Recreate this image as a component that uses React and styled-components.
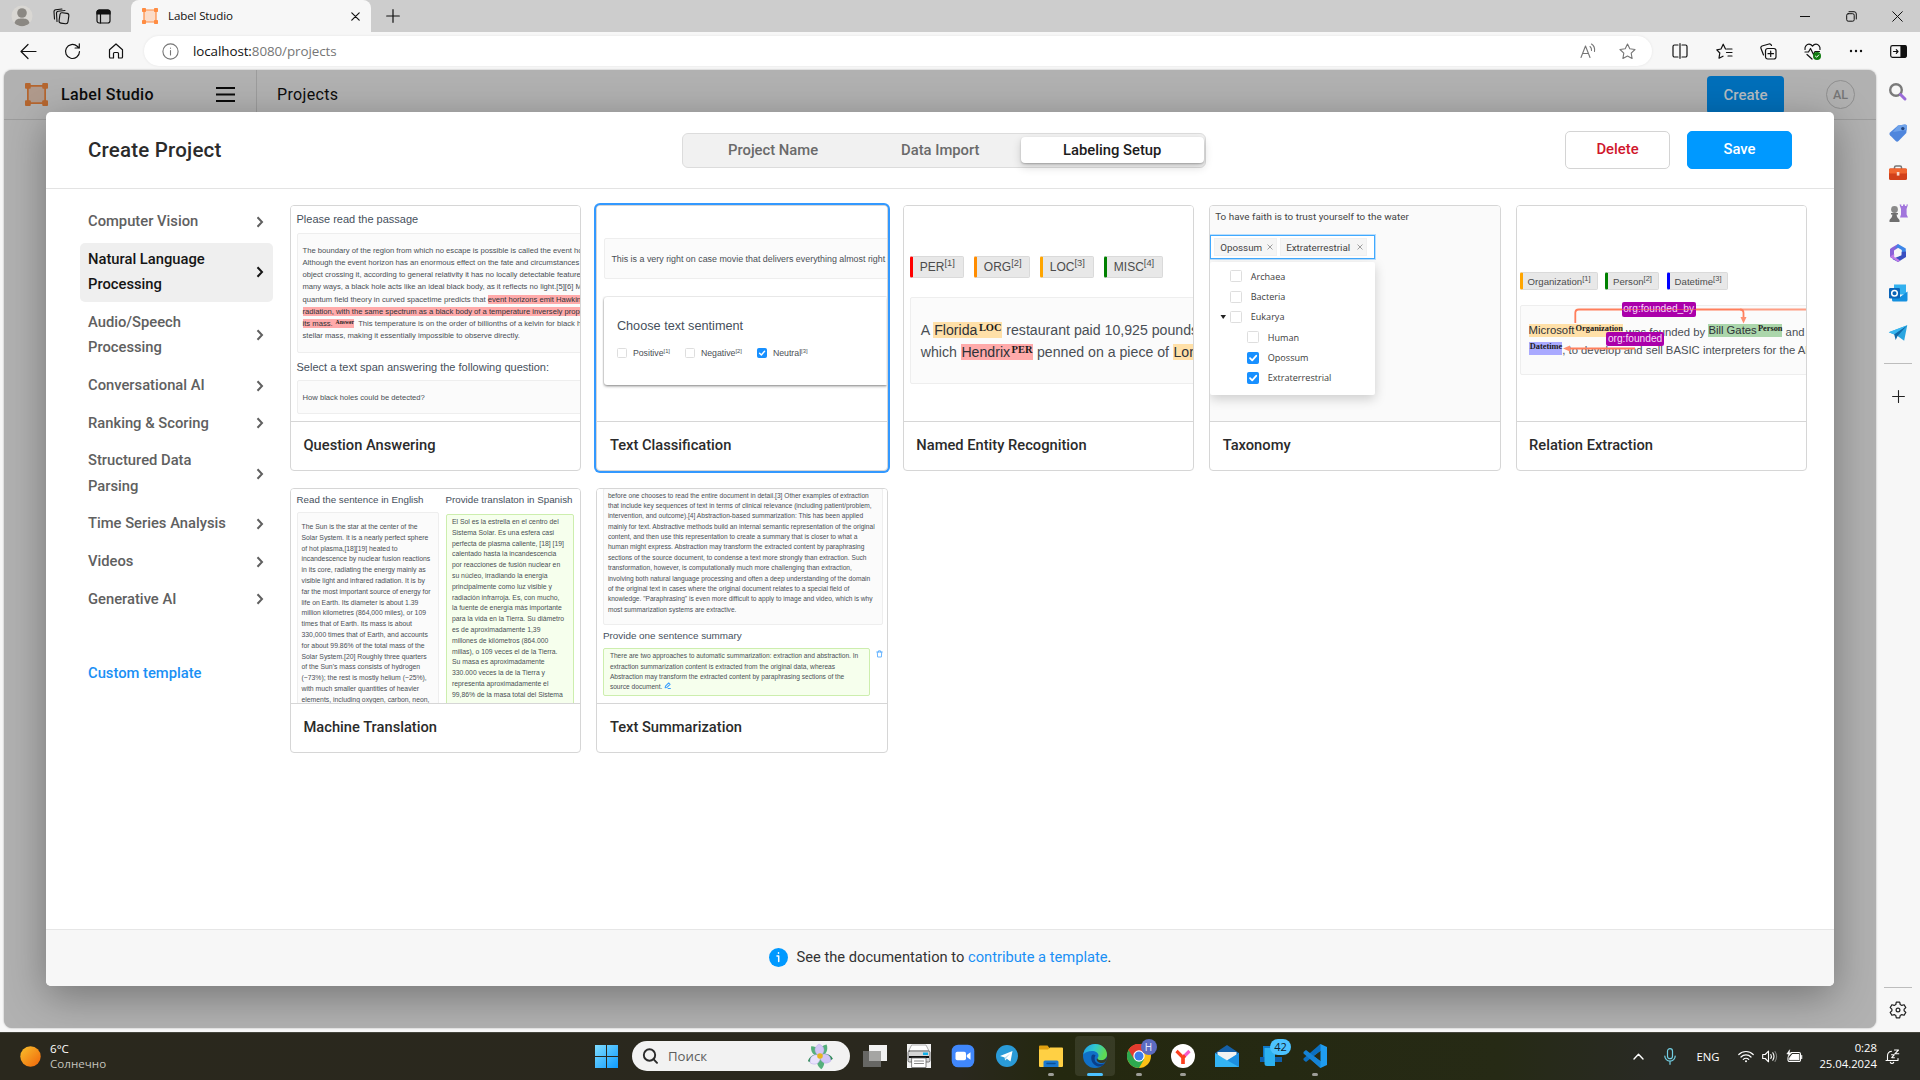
import React from "react";
import styled, { createGlobalStyle, css } from "styled-components";

const Global = createGlobalStyle`
  * { box-sizing: border-box; }
  html, body { margin: 0; padding: 0; }
  body { width: 1920px; height: 1080px; overflow: hidden; background: #f7f7f7; font-family: Roboto, "Liberation Sans", sans-serif; }
`;

const arial = `"Liberation Sans", Arial, sans-serif`;
const segoe = `"Open Sans", "Noto Sans", sans-serif`;

/* ---------- browser chrome ---------- */
const Desktop = styled.div`
  width: 1920px; height: 1080px; display: flex; flex-direction: column; overflow: hidden;
`;
const TitleBar = styled.div`
  height: 32px; flex: none; background: #cdcdcd; display: flex; align-items: center;
`;
const Slot = styled.div`
  width: ${(p) => p.$w || 44}px; height: 100%; flex: none; display: flex; align-items: center; justify-content: center;
  svg { display: block; flex: none; }
`;
const Tab = styled.div`
  width: 240px; height: 32px; background: #f7f7f7; border-radius: 8px 8px 0 0; display: flex; align-items: center;
  padding-left: 11px; gap: 10px; font: 12px ${segoe}; color: #111;
`;
const TabTitle = styled.span`
  flex: 1; letter-spacing: -0.15px; white-space: nowrap; font-size: 11.6px; padding-bottom: 1px;
`;
const WindowButtons = styled.div`
  margin-left: auto; display: flex; height: 100%;
`;
const Toolbar = styled.div`
  height: 38px; flex: none; background: #f7f7f7; display: flex; align-items: center;
`;
const NavGroup = styled.div`
  width: 144px; height: 100%; display: flex; padding-left: 6px;
`;
const AddressBar = styled.div`
  width: 1508px; height: 30px; border-radius: 15px; background: #fff; display: flex; align-items: center;
  padding-left: 16px; box-shadow: 0 0 3px rgba(0,0,0,0.08);
`;
const Url = styled.span`
  flex: 1; margin-left: 13px; font: 13.4px ${segoe}; color: #767676; letter-spacing: -0.08px;
  b { font-weight: 400; color: #111; }
`;
const Middle = styled.div`
  height: 962px; flex: none; display: flex; background: #f7f7f7; padding-left: 4px;
`;
const EdgeBar = styled.div`
  width: 44px; height: 100%; display: flex; flex-direction: column; align-items: center;
`;
const EdgeSlot = styled.div`
  width: 44px; height: ${(p) => p.$h || 40}px; display: flex; align-items: center; justify-content: center; flex: none;
`;
const EdgeLine = styled.div`
  width: 28px; height: 1px; background: #bdbdbd; flex: none;
`;
const Spacer = styled.div`
  flex: 1;
`;

/* ---------- page behind the dialog ---------- */
const Page = styled.div`
  width: 1872px; height: 958px; background: #b1b1b1; border-radius: 8px; overflow: hidden; position: relative;
  box-shadow: 0 0 2px rgba(0,0,0,0.35);
`;
const AppHeader = styled.div`
  height: 50px; border-bottom: 1px solid #9c9c9c; display: flex; align-items: center; color: #0c0c0c;
  padding: 0 21px;
`;
const Brand = styled.div`
  width: 231px; display: flex; align-items: center; height: 100%; padding-bottom: 1px;
`;
const BrandName = styled.span`
  margin-left: 13px; font-size: 16px; font-weight: 500; width: 155px; letter-spacing: 0.33px;
`;
const Crumb = styled.div`
  height: 49px; border-left: 1px solid #9c9c9c; padding-left: 20px; font-size: 16px; line-height: 49px; letter-spacing: 0.35px; flex: 1;
`;
const CreateButton = styled.div`
  width: 77px; height: 38px; border-radius: 4px; background: #006fba; color: #b5bcc1; font-size: 15px; font-weight: 500;
  display: flex; align-items: center; justify-content: center; margin-right: 42px;
`;
const Avatar = styled.div`
  width: 29px; height: 29px; border-radius: 50%; border: 1px solid #8f8f8f; color: #767676; font-size: 12.5px; font-weight: 500;
  display: flex; align-items: center; justify-content: center;
`;

/* ---------- dialog ---------- */
const Dialog = styled.div`
  position: absolute; left: 42px; top: 42px; width: 1788px; height: 874px; background: #fff; border-radius: 5px;
  box-shadow: 0 10px 40px rgba(0,0,0,0.34); display: flex; flex-direction: column; overflow: hidden;
`;
const DialogHeader = styled.div`
  height: 77px; flex: none; border-bottom: 1px solid #e3e3e3; display: flex; align-items: center; padding: 0 42px;
`;
const DialogTitle = styled.div`
  width: 594px; font-size: 20.5px; font-weight: 500; color: #2b2b2b; letter-spacing: 0.2px; padding-bottom: 1px;
`;
const Toggle = styled.div`
  width: 524px; height: 35px; border: 1px solid #dcdcdc; border-radius: 6px; background: #f1f1f1; display: flex; padding: 3px 1px 4px 0;
`;
const ToggleItem = styled.div`
  width: ${(p) => p.$w}px; padding-left: ${(p) => p.$pad}px; font-size: 14.8px; font-weight: 500; line-height: 26px; color: #6a6a6a; white-space: nowrap;
  ${(p) => p.$on && css`
    color: #1c1c1c; background: #fff; border-radius: 4px;
    box-shadow: 0 1px 2px rgba(0,0,0,0.25), 0 4px 10px rgba(0,0,0,0.16);
  `}
`;
const Actions = styled.div`
  margin-left: auto; display: flex; gap: 17px;
`;
const Button = styled.div`
  width: 105px; height: 38px; border-radius: 5px; font-size: 14.8px; font-weight: 500; display: flex; align-items: center; justify-content: center;
  padding-bottom: 2px; background: ${(p) => (p.$primary ? "#0099ff" : "#fff")}; color: ${(p) => (p.$primary ? "#fff" : "#d0162c")};
  border: 1px solid ${(p) => (p.$primary ? "#0099ff" : "#d4d4d4")};
`;
const DialogBody = styled.div`
  flex: 1; display: flex; padding: 16px 27px 0 34px;
`;
const Menu = styled.div`
  width: 193px; margin-right: 17px; flex: none; display: flex; flex-direction: column; gap: 4px;
`;
const MenuItem = styled.div`
  padding: 4px 9px 4px 8px; border-radius: 5px; font-size: 14.75px; font-weight: 500; line-height: 25.6px; display: flex; align-items: center; justify-content: space-between;
  color: ${(p) => (p.$on ? "#151515" : "#606060")}; background: ${(p) => (p.$on ? "#efefef" : "transparent")};
  span { max-width: 150px; }
`;
const CustomLink = styled.div`
  margin: 40px 8px 0; font-size: 14.75px; font-weight: 500; line-height: 26px; color: #1a90f5;
`;
const Cards = styled.div`
  flex: 1; display: grid; grid-template-columns: repeat(5, 1fr); grid-template-rows: 266px 265px; column-gap: 15px; row-gap: 17px; align-content: start;
`;
const CardBox = styled.div`
  min-width: 0; border: 1px solid #d6d6d6; border-radius: 4px; display: flex; flex-direction: column; overflow: hidden; background: #fff;
  ${(p) => p.$on && css`box-shadow: 0 0 0 2px #3399ff;`}
`;
const Preview = styled.div`
  flex: 1; min-height: 0; overflow: hidden; border-bottom: 1px solid #d6d6d6; position: relative;
  font-family: ${arial}; color: #4a4f55; white-space: nowrap; background: ${(p) => p.$bg || "#fff"};
  padding: ${(p) => p.$pad || "0"};
`;
const CardTitle = styled.div`
  height: 48px; flex: none; padding: 0 12.5px; line-height: 46px; font-size: 14.7px; font-weight: 500; color: #2b2b2b; white-space: nowrap;
`;
const DialogFooter = styled.div`
  height: 57px; flex: none; border-top: 1px solid #e6e6e6; background: #f7f7f7; display: flex; align-items: center; justify-content: center;
  font-size: 14.7px; color: #333; gap: 9px; padding-bottom: 2px;
  a { color: #1a90f5; }
`;

/* ---------- preview pieces ---------- */
const Heading = styled.div`
  font-size: ${(p) => p.$s || 11}px; line-height: 20px; height: 20px; color: #46505c; padding-top: ${(p) => p.$t || 0}px;
`;
const Panel = styled.div`
  height: ${(p) => p.$h}px; border: 1px solid #eeeeee; background: #fbfbfb; border-radius: 2px;
  padding: ${(p) => p.$pad || "0"}; margin: ${(p) => p.$m || "0"}; width: ${(p) => (p.$w ? p.$w + "px" : "auto")}; flex: none;
  font-size: ${(p) => p.$s}px; line-height: ${(p) => p.$lh}px;
`;
const GreenPanel = styled(Panel)`
  background: #f6ffed; border-color: #cdeeae;
`;
const Row = styled.div`
  height: ${(p) => p.$lh}px; white-space: pre;
`;
const Mark = styled.span`
  background: ${(p) => p.$c}; display: inline-block; line-height: ${(p) => p.$h}px; height: ${(p) => p.$h}px; vertical-align: top; margin-top: ${(p) => p.$t || 0}px;
  padding: 0 ${(p) => p.$p || 0}px; color: #2e3238;
  b { font-family: "Liberation Serif", "Times New Roman", serif; font-size: 0.74em; position: relative; top: -0.42em; margin-left: 0.14em; color: #1a1a1a; }
`;
const SentimentPanel = styled.div`
  height: 88px; background: #fff; border-radius: 3px 0 0 3px; box-shadow: 0 1px 3px rgba(0,0,0,0.5), 0 0 2px rgba(0,0,0,0.08); margin-top: 18px; padding: 19px 0 0 12.5px;
  clip-path: inset(-1px 0 -6px -2px);
`;
const Choices = styled.div`
  display: flex; margin-top: 11px; height: 12px; align-items: center; font-size: 8.75px;
`;
const Choice = styled.div`
  width: ${(p) => p.$w}px; display: flex; align-items: center; gap: 6px;
  sup { font-size: 5.8px; line-height: 0; vertical-align: 3px; }
`;
const Check = styled.span`
  width: ${(p) => p.$s}px; height: ${(p) => p.$s}px; border: 1px solid ${(p) => (p.$on ? "#1890ff" : "#dedede")}; background: ${(p) => (p.$on ? "#1890ff" : "#fff")};
  border-radius: 1.5px; display: flex; align-items: center; justify-content: center; flex: none;
`;
const Tags = styled.div`
  display: flex; gap: ${(p) => p.$gap}px;
`;
const Tag = styled.div`
  width: ${(p) => p.$w}px; height: ${(p) => p.$h}px; line-height: ${(p) => p.$h - 1}px; font-size: ${(p) => p.$s}px; background: #e8e8e8; border: 1px solid #dadada;
  border-left: 3px solid ${(p) => p.$c}; border-radius: 2px; padding-left: ${(p) => p.$p}px; color: #4c4c4c;
  sup { font-size: 0.78em; line-height: 0; vertical-align: 0.5em; }
`;
const SelectBox = styled.div`
  width: 165px; height: 24px; border: 1px solid #40a9ff; box-shadow: 0 0 0 1px rgba(64,169,255,0.35); background: #fff; display: flex; gap: 3px; padding: 2px 3px; margin-top: 8px;
  font: 9.8px Roboto, sans-serif; color: #444;
`;
const SelectTag = styled.div`
  width: ${(p) => p.$w}px; height: 18px; background: #f5f5f5; border: 1px solid #f0f0f0; display: flex; align-items: center; justify-content: space-between; padding: 0 3px 0 5px;
`;
const Dropdown = styled.div`
  width: 165px; height: 133px; background: #fff; margin-top: 3px; box-shadow: 0 4px 12px rgba(0,0,0,0.18); border-radius: 2px; padding-top: 4px;
  font: 9.1px ${segoe}; color: #3c3c3c;
`;
const TreeRow = styled.div`
  height: 20.35px; display: flex; align-items: center; gap: 8.5px; padding-left: ${(p) => (p.$deep ? 37 : p.$caret ? 9 : 20)}px;
  > svg { margin-right: -6.5px; }
`;
const Plain = styled.div`
  font: 9.9px Roboto, sans-serif; line-height: 21px; height: 21px; color: #444; padding-left: 5px; letter-spacing: 0.02px;
`;
const Columns = styled.div`
  display: flex; gap: 7px;
`;
const RelationLayer = styled.svg`
  position: absolute; left: 0; top: 0;
`;
const RelationLabel = styled.div`
  position: absolute; left: ${(p) => p.$x}px; top: ${(p) => p.$y}px; width: ${(p) => p.$w}px; height: 14.5px; background: #aa00aa; border-radius: 2px;
  color: #f6dcf6; font-size: 10.2px; line-height: 13.5px; text-align: center;
`;
const Strike = styled.i`
  position: absolute; left: 0; right: 0; top: 6.5px; height: 1.5px; background: rgba(255,110,80,0.55);
`;
const SummaryRow = styled.div`
  display: flex; gap: 6px; margin-top: 2.5px;
  > svg { margin-top: 2px; }
`;

/* ---------- taskbar ---------- */
const Taskbar = styled.div`
  height: 48px; flex: none; background: linear-gradient(90deg, #2a281d 0, #2a281e 50%, #24280f 55%, #262a15 78%, #292a24 86%); border-top: 1px solid #45453c; display: flex; align-items: center;
  font-family: ${segoe}; color: #fff; padding-bottom: 1px;
`;
const Weather = styled.div`
  width: 585px; padding-left: 20px; display: flex; gap: 9px; align-items: center; font-size: 11.6px; line-height: 15.5px;
  div { color: #c4c4be; font-size: 11.6px; }
  div:first-child { color: #fff; }
`;
const Search = styled.div`
  width: 218px; height: 30px; border-radius: 15px; background: #f2f2f2; margin: 0 3px 0 4px; display: flex; align-items: center; padding: 0 16px 0 10px; color: #5d5d5d; font-size: 13.2px;
  span { flex: 1; margin-left: 10px; padding-bottom: 1px; }
`;
const Task = styled.div`
  width: 44px; height: 46px; display: flex; align-items: center; justify-content: center; position: relative; flex: none;
  &::before { content: ""; position: absolute; left: 2px; top: 3px; width: 40px; height: 40px; border-radius: 4px; background: ${(p) => (p.$active ? "rgba(255,255,255,0.09)" : "transparent")}; }
  &::after { content: ""; position: absolute; bottom: 3px; height: 3px; border-radius: 2px; width: ${(p) => (p.$active ? 16 : p.$run ? 6 : 0)}px; background: ${(p) => (p.$active ? "#4cc2ff" : "#9d9d97")}; }
  > svg { position: relative; }
`;
const Badge = styled.span`
  position: absolute; left: ${(p) => p.$x}px; top: ${(p) => p.$y}px; width: ${(p) => p.$w}px; height: 16px; border-radius: 8px; background: ${(p) => p.$bg}; color: ${(p) => p.$fg};
  font-size: ${(p) => p.$s}px; line-height: 16px; text-align: center;
`;
const Tray = styled.div`
  margin-left: auto; display: flex; height: 100%; align-items: center; font-size: 11.3px;
`;
const Clock = styled.div`
  width: 66px; text-align: right; line-height: 16px; font-size: 11.3px; margin-right: 1px; white-space: nowrap;
`;

/* ---------- icons ---------- */
const Svg = ({ s = 16, w, h, vb, children, c = "#222", sw = 1.2, ...r }) => (
  <svg width={w || s} height={h || s} viewBox={vb || `0 0 ${w || s} ${h || s}`} fill="none" stroke={c} strokeWidth={sw} strokeLinecap="round" strokeLinejoin="round" {...r}>{children}</svg>
);
const LabelLogo = ({ s, a = "#ff8c42", f = "#fbdcc8" }) => (
  <Svg s={s} vb="0 0 24 24" c="none">
    <rect x="3" y="3" width="18" height="18" fill={f} stroke={a} strokeWidth="1.8" />
    {[[0, 0], [18, 0], [0, 18], [18, 18]].map(([x, y]) => <rect key={`${x}-${y}`} x={x} y={y} width="6" height="6" rx="1" fill={a} />)}
  </Svg>
);
const Chevron = ({ c }) => <Svg w={8} h={12} c={c} sw={2}><path d="M1.5 1.2 6 6 1.5 10.8" strokeLinecap="butt" strokeLinejoin="miter" /></Svg>;
const Tick = ({ s }) => <Svg s={s} vb="0 0 10 10" c="#fff" sw={1.8}><path d="M2 5.2 4.2 7.4 8.2 2.8" /></Svg>;

const EdgeIcons = [
  <Svg s={20} key="s" sw={2.4} c="#7a7a7a"><circle cx="8" cy="8" r="5.8" /><path d="M12.5 12.5 17 17" stroke="#9a6bd8" strokeWidth="3" /></Svg>,
  <Svg s={20} key="t" c="none"><path d="M10 2.5 17 1.5a2 2 0 0 1 2 2L18.3 10 10.5 18a2 2 0 0 1-2.8 0L2 12.3a2 2 0 0 1 0-2.8z" fill="#4f86dd" /><path d="M10 2.5 17 1.5a2 2 0 0 1 2 2L18.7 7 5 9z" fill="#6ea2ea" /><circle cx="14.8" cy="5.6" r="1.7" fill="#23457f" /></Svg>,
  <Svg s={20} key="b" c="none"><path d="M6.5 6V4.5A1.5 1.5 0 0 1 8 3h4a1.5 1.5 0 0 1 1.5 1.5V6" stroke="#777" strokeWidth="1.5" /><rect x="1" y="5.5" width="18" height="11.5" rx="1.5" fill="#d2411a" /><rect x="1" y="5.5" width="18" height="5" rx="1" fill="#f0662f" /><rect x="8.8" y="9" width="2.6" height="3.6" fill="#f7d9cc" /></Svg>,
  <Svg s={20} key="c" c="none"><path d="M11.5 1.500h1.800v1.600h1.700V1.500h1.900v1.600h1.600V1.500H20L18.600 6v5.500l1.400 3h-8l1-3V6z" fill="#a175dc" /><circle cx="6.500" cy="6.500" r="3.400" fill="#8a8a8a" /><path d="M3 10h7v1.500H8.600c0 3 1.600 3.500 2.900 5.500V19H1.500v-2c1.300-2 2.900-2.500 2.900-5.500H3z" fill="#6f6f6f" /></Svg>,
  <Svg s={20} key="m" c="none"><path d="M10 1 4 4.500 2 6v8l4 2.500V7.500L11.500 4z" fill="#8b62d8" /><path d="M10 1 17.800 5.500V11l-4-2V7L9.500 4.500 6.500 6z" fill="#3d86e8" /><path d="M18 8.500V14l-8 5-5.500-3 9-3.800V9z" fill="#3a4fc0" /><path d="M2 13.500 6.200 11v3l3.800 2 2 1.800-2 1.200z" fill="#c07be8" /><circle cx="10" cy="10" r="3.200" fill="#f7f7f7" /></Svg>,
  <Svg s={20} key="o" c="none"><rect x="6" y="1.500" width="12" height="10" fill="#33b1ef" /><path d="M4 8.500 12 14l7.500-5.500V17a1.500 1.500 0 0 1-1.500 1.500H5.500A1.500 1.500 0 0 1 4 17z" fill="#1490df" /><rect x="1" y="5" width="11" height="10.500" rx="1.200" fill="#0a64b8" /><circle cx="6.500" cy="10.200" r="2.800" stroke="#fff" strokeWidth="1.500" /></Svg>,
  <Svg s={20} vb="0 0 26 26" key="p" c="none"><path d="M1 12 25 3 21 23 12.500 17z" fill="#2aa5e0" /><path d="M8 14.500 25 3 12.500 17 10 22z" fill="#1169a8" /><path d="M1 12 25 3 8 14.500z" fill="#38b7f0" /></Svg>,
];

const Flower = () => (
  <Svg s={28} vb="0 0 28 28" c="none">
    {[0, 72, 144, 216, 288].map((a) => <path key={a} transform={`rotate(${a + 30} 14 14)`} d="M14 14C8.500 10 10 4 14 .8c4 3.200 5.500 9.200 0 13.200z" fill={a % 144 ? "#2c8a55" : "#56b07c"} />)}
    {[-5, 115, 235].map((a) => <path key={a} transform={`rotate(${a} 14 14)`} d="M14 14.500C7.500 10.500 8.500 4.500 14 2c5.500 2.500 6.500 8.500 0 12.500z" fill={a === 235 ? "#e9e2fc" : "#d3c6f6"} stroke="#b3a2e6" strokeWidth="0.4" />)}
    <circle cx="14" cy="14" r="2.800" fill="#e8b51e" />
  </Svg>
);

/* ---------- cards ---------- */
const QA = () => (
  <Preview $pad="3px 0 0 5.5px">
    <Heading>Please read the passage</Heading>
    <Panel $h={120} $m="4px -2px 0 0" $pad="11px 0 0 5px" $s={7.65} $lh={12.15}>
      <Row $lh={12.15}>The boundary of the region from which no escape is possible is called the event horizon.</Row>
      <Row $lh={12.15}>Although the event horizon has an enormous effect on the fate and circumstances of an</Row>
      <Row $lh={12.15}>object crossing it, according to general relativity it has no locally detectable features. In</Row>
      <Row $lh={12.15}>many ways, a black hole acts like an ideal black body, as it reflects no light.[5][6] Moreover,</Row>
      <Row $lh={12.15}>quantum field theory in curved spacetime predicts that <Mark $c="#ffaaaa" $h={9} $t={1.5}>event horizons emit Hawking</Mark></Row>
      <Row $lh={12.15}><Mark $c="#ffaaaa" $h={9} $t={1.5}>radiation, with the same spectrum as a black body of a temperature inversely proportional to</Mark></Row>
      <Row $lh={12.15}><Mark $c="#ffaaaa" $h={9} $t={1.5}>its mass. <b>Answer</b></Mark>  This temperature is on the order of billionths of a kelvin for black holes of</Row>
      <Row $lh={12.15}>stellar mass, making it essentially impossible to observe directly.</Row>
    </Panel>
    <Heading $t={3.5}>Select a text span answering the following question:</Heading>
    <Panel $h={34} $m="7px -2px 0 0" $pad="0 0 0 5px" $s={7.65} $lh={33}>How black holes could be detected?</Panel>
  </Preview>
);

const TextClass = () => (
  <Preview $pad="32px 0 0 7px">
    <Panel $h={41} $m="0 -2px 0 0" $pad="0 0 0 6px" $s={8.88} $lh={40}>This is a very right on case movie that delivers everything almost right</Panel>
    <SentimentPanel>
      <Heading $s={12.7}>Choose text sentiment</Heading>
      <Choices>
        <Choice $w={68}><Check $s={10} /><span>Positive<sup>[1]</sup></span></Choice>
        <Choice $w={72}><Check $s={10} /><span>Negative<sup>[2]</sup></span></Choice>
        <Choice $w={60}><Check $s={10} $on><Tick s={8} /></Check><span>Neutral<sup>[3]</sup></span></Choice>
      </Choices>
    </SentimentPanel>
  </Preview>
);

const NER = () => (
  <Preview $pad="50px 0 0 6px">
    <Tags $gap={10}>
      <Tag $w={54} $h={22} $s={12} $p={7} $c="#ff0000">PER<sup>[1]</sup></Tag>
      <Tag $w={56} $h={22} $s={12} $p={7} $c="#ff8c00">ORG<sup>[2]</sup></Tag>
      <Tag $w={54} $h={22} $s={12} $p={7} $c="#ffa500">LOC<sup>[3]</sup></Tag>
      <Tag $w={59} $h={22} $s={12} $p={7} $c="#008000">MISC<sup>[4]</sup></Tag>
    </Tags>
    <Panel $h={87} $m="19px -2px 0 0" $pad="21px 0 0 10px" $s={14.15} $lh={22.3}>
      <Row $lh={22.3}>A <Mark $c="#ffe0a8" $h={16} $t={3} $p={0.8}>Florida<b>LOC</b></Mark> restaurant paid 10,925 pounds for the</Row>
      <Row $lh={22.3}>which <Mark $c="#ffaaaa" $h={16} $t={3} $p={0.5}>Hendrix<b>PER</b></Mark> penned on a piece of <Mark $c="#ffe0a8" $h={16} $t={3} $p={0.5}>London</Mark></Row>
    </Panel>
  </Preview>
);

const tree = [["Archaea"], ["Bacteria"], ["Eukarya", 0, 0, 1], ["Human", 1], ["Opossum", 1, 1], ["Extraterrestrial", 1, 1]];
const Taxonomy = () => (
  <Preview $bg="#fafafa">
    <Plain>To have faith is to trust yourself to the water</Plain>
    <SelectBox>
      <SelectTag $w={63}>Opossum<Svg s={6} c="#888" sw={0.8}><path d="M.8.8 5.2 5.2M5.2.8.8 5.2" /></Svg></SelectTag>
      <SelectTag $w={87}>Extraterrestrial<Svg s={6} c="#888" sw={0.8}><path d="M.8.8 5.2 5.2M5.2.8.8 5.2" /></Svg></SelectTag>
    </SelectBox>
    <Dropdown>
      {tree.map(([t, deep, on, caret]) => (
        <TreeRow key={t} $deep={deep} $caret={caret}>
          {caret ? <Svg w={9} h={6} c="none"><path d="M1.500 1h5.500L4.200 5z" fill="#222" /></Svg> : null}
          <Check $s={12} $on={on}>{on ? <Tick s={10} /> : null}</Check>{t}
        </TreeRow>
      ))}
    </Dropdown>
  </Preview>
);

const Relation = () => (
  <Preview $pad="66px 0 0 3px">
    <Tags $gap={7.5}>
      <Tag $w={78} $h={18} $s={9.65} $p={5} $c="#ffa500">Organization<sup>[1]</sup></Tag>
      <Tag $w={54} $h={18} $s={9.65} $p={5} $c="#008000">Person<sup>[2]</sup></Tag>
      <Tag $w={61} $h={18} $s={9.65} $p={5} $c="#0000ff">Datetime<sup>[3]</sup></Tag>
    </Tags>
    <Panel $h={70} $m="15px -2px 0 0" $pad="16.5px 0 0 8px" $s={11.3} $lh={18}>
      <Row $lh={18}><Mark $c="#ffe0a8" $h={13} $t={1.5}>Microsoft<b>Organization</b></Mark> was founded by <Mark $c="#abd6ab" $h={13} $t={1.5}>Bill Gates<b>Person</b></Mark> and <Mark $c="#abd6ab" $h={13} $t={1.5}>Paul</Mark></Row>
      <Row $lh={18}><Mark $c="#aaaaff" $h={13} $t={1.5}><b>Datetime</b></Mark>, to develop and sell BASIC interpreters for the Altair</Row>
    </Panel>
    <RelationLayer width="290" height="215">
      <g fill="none" stroke="#ff7f5c" strokeWidth="1.8">
        <path d="M58.300 117v-10q0-3.500 3.500-3.500H223q3.500 0 3.500 3.500v6" />
        <path d="M223 103.500h68" opacity="0.75" />
        <path d="M52 142.500h66" />
      </g>
      <path d="M223.500 111h6l-3 6.500zM46 142.500l7-3v6z" fill="#ff8f70" />
    </RelationLayer>
    <RelationLabel $x={105} $y={96} $w={74}>org:founded_by<Strike /></RelationLabel>
    <RelationLabel $x={89.5} $y={125.5} $w={58}>org:founded</RelationLabel>
  </Preview>
);

const english = ["The Sun is the star at the center of the", "Solar System. It is a nearly perfect sphere", "of hot plasma,[18][19] heated to", "incandescence by nuclear fusion reactions", "in its core, radiating the energy mainly as", "visible light and infrared radiation. It is by", "far the most important source of energy for", "life on Earth. Its diameter is about 1.39", "million kilometres (864,000 miles), or 109", "times that of Earth. Its mass is about", "330,000 times that of Earth, and accounts", "for about 99.86% of the total mass of the", "Solar System.[20] Roughly three quarters", "of the Sun's mass consists of hydrogen", "(~73%); the rest is mostly helium (~25%),", "with much smaller quantities of heavier", "elements, including oxygen, carbon, neon,"];
const spanish = ["El Sol es la estrella en el centro del", "Sistema Solar. Es una esfera casi", "perfecta de plasma caliente, [18] [19]", "calentado hasta la incandescencia", "por reacciones de fusión nuclear en", "su núcleo, irradiando la energía", "principalmente como luz visible y", "radiación infrarroja. Es, con mucho,", "la fuente de energía más importante", "para la vida en la Tierra. Su diámetro", "es de aproximadamente 1,39", "millones de kilómetros (864.000", "millas), o 109 veces el de la Tierra.", "Su masa es aproximadamente", "330.000 veces la de la Tierra y", "representa aproximadamente el", "99,86% de la masa total del Sistema", "Solar.[20] Más o menos tres"];
const Translation = () => (
  <Preview $pad="1px 0 0 5.5px">
    <Columns>
      <div>
        <Heading $s={9.77}>Read the sentence in English</Heading>
        <Panel $w={142} $h={220} $m="2px 0 0" $pad="9px 0 0 4px" $s={6.84} $lh={10.81}>{english.map((t) => <Row key={t} $lh={10.81}>{t}</Row>)}</Panel>
      </div>
      <div>
        <Heading $s={9.77}>Provide translaton in Spanish</Heading>
        <GreenPanel $w={128} $h={220} $m="3.5px 0 0" $pad="2.5px 0 0 5.5px" $s={6.84} $lh={10.81}>{spanish.map((t) => <Row key={t} $lh={10.81}>{t}</Row>)}</GreenPanel>
      </div>
    </Columns>
  </Preview>
);

const article = ["before one chooses to read the entire document in detail.[3] Other examples of extraction", "that include key sequences of text in terms of clinical relevance (including patient/problem,", "intervention, and outcome).[4] Abstraction-based summarization: This has been applied", "mainly for text. Abstractive methods build an internal semantic representation of the original", "content, and then use this representation to create a summary that is closer to what a", "human might express. Abstraction may transform the extracted content by paraphrasing", "sections of the source document, to condense a text more strongly than extraction. Such", "transformation, however, is computationally much more challenging than extraction,", "involving both natural language processing and often a deep understanding of the domain", "of the original text in cases where the original document relates to a special field of", "knowledge. \"Paraphrasing\" is even more difficult to apply to image and video, which is why", "most summarization systems are extractive."];
const summary = ["There are two approaches to automatic summarization: extraction and abstraction. In", "extraction summarization content is extracted from the original data, whereas", "Abstraction may transform the extracted content by paraphrasing sections of the"];
const Summarization = () => (
  <Preview $pad="0 0 0 5.5px">
    <Panel $w={280} $h={137} $m="-1px 0 0" $pad="1.5px 0 0 4px" $s={6.62} $lh={10.38}>{article.map((t) => <Row key={t} $lh={10.38}>{t}</Row>)}</Panel>
    <Heading $s={9.9} $t={1}>Provide one sentence summary</Heading>
    <SummaryRow>
      <GreenPanel $w={267} $h={48} $pad="2.8px 0 0 6px" $s={6.62} $lh={10.4}>
        {summary.map((t) => <Row key={t} $lh={10.4}>{t}</Row>)}
        <Row $lh={10.4}>source document. <Svg s={7} vb="0 0 6 6" c="#3aa0ff" sw={0.9}><path d="M1 5 1.300 3.600 4 .8 5.200 2 2.500 4.700zM3.500 5.500h2" /></Svg></Row>
      </GreenPanel>
      <Svg w={7} h={8} c="#5aaeff" sw={0.9}><path d="M.8 2h5.400M1.300 2l.3 5h3.800l.3-5M2.500 2V.8h2V2" /></Svg>
    </SummaryRow>
  </Preview>
);

const cards = [["Question Answering", QA], ["Text Classification", TextClass, true], ["Named Entity Recognition", NER], ["Taxonomy", Taxonomy], ["Relation Extraction", Relation], ["Machine Translation", Translation], ["Text Summarization", Summarization]];
const menu = ["Computer Vision", "Natural Language Processing", "Audio/Speech Processing", "Conversational AI", "Ranking & Scoring", "Structured Data Parsing", "Time Series Analysis", "Videos", "Generative AI"];

export default function App() {
  return (
    <Desktop>
      <Global />
      <TitleBar>
        <Slot $w={43}><Svg s={22} c="none"><circle cx="11" cy="11" r="10.500" fill="#d9d7d3" /><circle cx="11" cy="8" r="4.800" fill="#8b8883" /><path d="M3.500 18c1-4 4-4.500 7.500-4.500s6.500.5 7.500 4.500a10.500 10.500 0 0 1-15 0z" fill="#8b8883" /></Svg></Slot>
        <Slot $w={37}><Svg s={17} c="#111" sw={1.1}><rect x="6.500" y="5" width="9" height="10.500" rx="2.200" transform="rotate(8 11 10)" /><path d="M4 13.500 3.500 5.500A2 2 0 0 1 5.200 3.300L12 2.500M1.500 11 1 4A2 2 0 0 1 2.700 1.800L9 1" /></Svg></Slot>
        <Slot $w={47}><Svg s={15} c="#111"><rect x="1" y="1" width="13" height="13" rx="2.200" /><path d="M1 3.200A2.200 2.200 0 0 1 3.200 1h8.600A2.200 2.200 0 0 1 14 3.200V5H1z" fill="#111" /><path d="M4.500 5v9" /></Svg></Slot>
        <Slot $w={4} />
        <Tab><LabelLogo s={16} /><TabTitle>Label Studio</TabTitle><Slot $w={32}><Svg s={9} c="#111"><path d="M.8.8 8.200 8.200M8.200.8.8 8.200" /></Svg></Slot></Tab>
        <Slot $w={43}><Svg s={14} c="#111" sw={1.2}><path d="M7 .7v12.600M.7 7h12.600" /></Svg></Slot>
        <WindowButtons>
          <Slot $w={46}><Svg s={10} c="#111" sw={1}><path d="M0 5.500h10" /></Svg></Slot>
          <Slot $w={46}><Svg s={11} c="#111" sw={1}><rect x=".7" y="2.700" width="7.500" height="7.500" rx="1.500" /><path d="M3 .7h5a2.300 2.300 0 0 1 2.300 2.300v5" /></Svg></Slot>
          <Slot $w={46}><Svg s={11} c="#111" sw={1}><path d="M.7.7 10.300 10.300M10.300.7.7 10.300" /></Svg></Slot>
        </WindowButtons>
      </TitleBar>
      <Toolbar>
        <NavGroup>
          <Slot><Svg s={17} c="#111" sw={1.2}><path d="M16 8.500H1M8 1.500 1 8.500l7 7" /></Svg></Slot>
          <Slot><Svg s={17} c="#111" sw={1.2}><path d="M15.500 8.500a7 7 0 1 1-2.300-5.200L15 5M15.300.8V5h-4.200" /></Svg></Slot>
          <Slot><Svg s={16} c="#111" sw={1.2}><path d="M1.500 6.800 8 1l6.500 5.800V14a1 1 0 0 1-1 1h-3V10.500a1 1 0 0 0-1-1h-3a1 1 0 0 0-1 1V15h-3a1 1 0 0 1-1-1z" /></Svg></Slot>
        </NavGroup>
        <AddressBar>
          <Slot $w={20}><Svg s={17} c="#767676" sw={1.1}><circle cx="8.500" cy="8.500" r="7.600" /><path d="M8.500 7.500v4.500M8.500 5v.2" /></Svg></Slot>
          <Url><b>localhost:</b>8080/projects</Url>
          <Slot $w={40}><Svg w={16} h={16} c="#767676" sw={1.1}><path d="M1 14.500 5.500 3 10 14.500M2.500 10.500h6M10 3.500q1.800 1.500 1.500 4M11.500 1q3.800 2.500 3 7.500" /></Svg></Slot>
          <Slot $w={38}><Svg s={17} c="#767676" sw={1.1}><path d="m8.500 1 2.300 4.800 5.200.7-3.800 3.700.9 5.300-4.600-2.500-4.600 2.500.9-5.300L1 6.500l5.200-.7z" /></Svg></Slot>
          <Slot $w={6} />
        </AddressBar>
        <Slot $w={6} />
        <Slot><Svg s={16} c="#111"><path d="M6 2H2.500A1.500 1.500 0 0 0 1 3.500v9A1.500 1.500 0 0 0 2.500 14H6M10 2h3.500A1.500 1.500 0 0 1 15 3.500v9a1.500 1.500 0 0 1-1.500 1.500H10M8 .7v14.600" /></Svg></Slot>
        <Slot><Svg s={17} c="#111"><path d="M10 6H9.500L7.200 1.200 5 6 .8 6.800 3.800 10 3 15.200l4-2M11 6h5M10.500 9.500H16M12 13h4" /></Svg></Slot>
        <Slot><Svg s={17} c="#111"><rect x="5.500" y="5.500" width="10.500" height="10.500" rx="2.200" /><path d="M10.700 8v5.500M8 10.700h5.500M3.500 12 1 5.500A2 2 0 0 1 2 3l7-2a2 2 0 0 1 2.500 1.500" /></Svg></Slot>
        <Slot><Svg s={17} c="#111"><path d="M1 6.500C.5 3 3 1.200 5 1.200c1.800 0 3 1.300 3.500 2 .5-.7 1.700-2 3.500-2 2 0 4.500 1.800 4 5.300M1 9h3.500L6.500 5.500l3 6L11 8.500h4.500M3 11.500 8 16" /><circle cx="13" cy="13" r="4" fill="#107c10" stroke="none" /><path d="m11.500 13.200 1.200 1L14.700 12" stroke="#fff" strokeWidth="1" /></Svg></Slot>
        <Slot><Svg s={14} c="none">{[2, 7, 12].map((x) => <circle key={x} cx={x} cy="7" r="1.200" fill="#111" />)}</Svg></Slot>
        <Slot $w={41}><Svg w={17} h={13} c="#111"><rect x=".7" y=".7" width="15.600" height="11.600" rx="1.800" /><path d="M11 .7h3.500a1.800 1.800 0 0 1 1.800 1.800v8a1.800 1.800 0 0 1-1.800 1.800H11z" fill="#111" /><path d="M3.500 6.500h4.500M6.300 4.700 8 6.500 6.300 8.300" /></Svg></Slot>
      </Toolbar>
      <Middle>
        <Page>
          <AppHeader>
            <Brand><LabelLogo s={23} a="#b5662f" f="#b09a8c" /><BrandName>Label Studio</BrandName><Svg w={19} h={15} c="#0a0a0a" sw={2}><path d="M0 1h19M0 7.500h19M0 14h19" strokeLinecap="butt" /></Svg></Brand>
            <Crumb>Projects</Crumb>
            <CreateButton>Create</CreateButton>
            <Avatar>AL</Avatar>
          </AppHeader>
          <Dialog>
            <DialogHeader>
              <DialogTitle>Create Project</DialogTitle>
              <Toggle>
                <ToggleItem $w={174} $pad={45}>Project Name</ToggleItem>
                <ToggleItem $w={164} $pad={44}>Data Import</ToggleItem>
                <ToggleItem $w={183} $pad={42} $on>Labeling Setup</ToggleItem>
              </Toggle>
              <Actions><Button>Delete</Button><Button $primary>Save</Button></Actions>
            </DialogHeader>
            <DialogBody>
              <Menu>
                {menu.map((m, i) => <MenuItem key={m} $on={i === 1}><span>{m}</span><Chevron c={i === 1 ? "#151515" : "#606060"} /></MenuItem>)}
                <CustomLink>Custom template</CustomLink>
              </Menu>
              <Cards>
                {cards.map(([t, P, on]) => <CardBox key={t} $on={on}><P /><CardTitle>{t}</CardTitle></CardBox>)}
              </Cards>
            </DialogBody>
            <DialogFooter>
              <Svg s={19} c="none"><circle cx="9.500" cy="9.500" r="9.500" fill="#0099ff" /><path d="M8 8h1.700v5.500M9.500 4.800v.4" stroke="#fff" strokeWidth="1.500" /></Svg>
              <span>See the documentation to <a>contribute a template</a>.</span>
            </DialogFooter>
          </Dialog>
        </Page>
        <EdgeBar>
          {EdgeIcons.map((ic, i) => <EdgeSlot key={i} $h={i === 0 ? 43 : 40}>{ic}</EdgeSlot>)}
          <EdgeSlot $h={10} />
          <EdgeLine />
          <EdgeSlot $h={65}><Svg s={13} c="#222" sw={1.1}><path d="M6.500.6v11.800M.6 6.500h11.800" /></Svg></EdgeSlot>
          <Spacer />
          <EdgeLine />
          <EdgeSlot $h={44}><Svg s={18} c="#222" sw={1.2}><circle cx="9" cy="9" r="1.900" /><path d="M7.300 1.200h3.400l.5 2.300 1.600.9 2.300-.7 1.700 2.900-1.700 1.600v1.600l1.700 1.600-1.700 2.900-2.300-.7-1.600.9-.5 2.300H7.300l-.5-2.300-1.600-.9-2.300.7-1.700-2.900 1.700-1.600V8.200L1.200 6.600l1.700-2.900 2.300.7 1.600-.9z" /></Svg></EdgeSlot>
        </EdgeBar>
      </Middle>
      <Taskbar>
        <Weather>
          <Svg s={21} c="none"><defs><linearGradient id="sun" x1="0" y1="0" x2="1" y2="1"><stop offset="0" stopColor="#f8c12c" /><stop offset="1" stopColor="#f0640a" /></linearGradient></defs><circle cx="10.500" cy="10.500" r="10.200" fill="url(#sun)" /></Svg>
          <section><div>6°C</div><div>Солнечно</div></section>
        </Weather>
        <Slot $w={43}><Svg s={23} c="none"><defs><linearGradient id="win" x1="0" y1="0" x2="1" y2="1" gradientUnits="objectBoundingBox"><stop offset="0" stopColor="#7fdcff" /><stop offset="1" stopColor="#0d9bff" /></linearGradient></defs><path d="M0 0h11v11H0zM12 0h11v11H12zM0 12h11v11H0zM12 12h11v11H12z" fill="url(#win)" /></Svg></Slot>
        <Search><Svg s={16} c="#2b2b2b" sw={1.9}><circle cx="7.500" cy="7" r="5.700" /><path d="m11.700 11.300 3.300 3.500" /></Svg><span>Поиск</span><Flower /></Search>
        <Task><Svg s={24} c="none"><rect x="6" y="1" width="18" height="16" fill="#f2f2f2" /><rect x="0" y="7" width="18" height="16" fill="#6e6e6c" opacity=".9" /><rect x="6" y="7" width="12" height="10" fill="#a5a5a3" /></Svg></Task>
        <Task><Svg s={24} c="none"><rect width="24" height="24" fill="#f3f3f3" /><path d="M5 1h14l3 6H2z" fill="#fff" stroke="#999" strokeWidth=".8" /><rect x="1" y="7" width="22" height="11" rx="1.500" fill="#d5d5d5" stroke="#555" strokeWidth=".8" /><rect x="16" y="8.500" width="5" height="2.500" fill="#12b0e8" /><rect x="2" y="12" width="20" height="2" fill="#111" /><rect x="5" y="14" width="14" height="9.500" fill="#fff" stroke="#666" strokeWidth=".8" /><path d="M7.500 17h9M7.500 19.500h9" stroke="#888" /></Svg></Task>
        <Task><Svg s={24} c="none"><rect x=".7" y=".7" width="22.600" height="22.600" rx="6.500" fill="#4087fc" /><rect x="4.500" y="7.800" width="10.500" height="8.400" rx="1.800" fill="#fff" /><path d="m15.800 11 3.700-2.700v7.400L15.800 13z" fill="#fff" /></Svg></Task>
        <Task><Svg s={24} c="none"><circle cx="12" cy="12" r="11" fill="#2a9bd8" /><path d="M5 12 17.500 7l-2 10.500-3.700-2.700-1.800 1.800-.3-3.200z" fill="#fff" /><path d="m9.700 13.400 5.500-4-4 4.800-.2 2z" fill="#b8dcf0" /></Svg></Task>
        <Task $run><Svg s={24} c="none"><path d="M0 2.500a1 1 0 0 1 1-1h7.500L10.500 4v4H0z" fill="#e0a010" /><path d="M0 5.500h9L11 3.500h12a1 1 0 0 1 1 1V22a1 1 0 0 1-1 1H1a1 1 0 0 1-1-1z" fill="#ffd044" /><path d="M4.500 23v-5a1.500 1.500 0 0 1 1.500-1.500h12a1.500 1.500 0 0 1 1.500 1.500v5z" fill="#1a78d0" /><path d="M8 19.500h8" stroke="#0a4f98" strokeWidth="1.500" /></Svg></Task>
        <Task $active>
          <Svg s={24} c="none">
            <defs><linearGradient id="eg" x1="0" y1="0" x2="1" y2=".3"><stop offset="0" stopColor="#1f9be8" /><stop offset=".5" stopColor="#30c8d0" /><stop offset="1" stopColor="#5fdb50" /></linearGradient></defs>
            <circle cx="12" cy="12" r="12" fill="#1070c8" />
            <path d="M.3 10.500C1.300 4 6.500 0 12 0c7 0 12 5 12 10.500 0 3.500-2.800 5.800-6 5.800-2.700 0-4-1.100-3.500-2.200.5-.8 1-1.400 1-2.600C15.500 9 12.500 7 9 7 5 7 2 8.500.3 10.500z" fill="url(#eg)" />
            <path d="M8.500 12c-1 4 1 9 6.500 10.500 3 .3 5.500-1 7-3.200-3 1.200-6.500 1-8.800-.8C11.500 17 11 14 12.500 11.200 10.500 10 9 10.500 8.500 12z" fill="#0a3f8a" />
            <path d="M24 12.500c-.6 2.400-3 3.800-6 3.800-2.700 0-4-1.100-3.500-2.200-1.600 1.200-.8 3.400 1.500 4.400 2.500 1 4.700.6 6.200-.2 1-1.600 1.800-3.800 1.800-5.800z" fill="#373a28" />
          </Svg>
        </Task>
        <Task $run><Svg s={24} c="none"><circle cx="12" cy="12" r="12" fill="#fbc116" /><path d="M12 12 1.600 6A12 12 0 0 1 22.400 6z" fill="#e33b2e" /><path d="M12 12 1.600 6A12 12 0 0 0 12 24l5.200-9z" fill="#2da94f" /><path d="M12 6.500h10.700A12 12 0 0 0 1.600 6L7 15z" fill="#e33b2e" /><circle cx="12" cy="12" r="5.700" fill="#fff" /><circle cx="12" cy="12" r="4.500" fill="#3b7ded" /></Svg><Badge $x={23.5} $y={6} $w={16} $bg="#5c6bc0" $fg="#e8eaff" $s={10}>H</Badge></Task>
        <Task $run><Svg s={24} c="none"><circle cx="12" cy="12" r="12" fill="#fff" /><path d="M5.500 7 12 13.500V20" stroke="#fc3f1d" strokeWidth="3.200" strokeLinecap="butt" /><path d="m12 13.500 6.500-6.500" stroke="#f55ac8" strokeWidth="3.200" strokeLinecap="butt" /><path d="M12 20v-6.500l2-2" stroke="#fc3f1d" strokeWidth="3.200" strokeLinecap="butt" /></Svg></Task>
        <Task><Svg s={24} c="none"><path d="M0 9 12 1l12 8v3H0z" fill="#1560a8" /><path d="M2.500 8h19v10h-19z" fill="#f2f2f2" /><path d="M0 9l12 7.500L24 9v14H0z" fill="#33b4f4" /><path d="M24 23 8 14l4 2.500L24 9z" fill="#1583dc" opacity=".75" /></Svg></Task>
        <Task><Svg s={24} c="none"><path d="M4 2h12v14H4z" fill="#0e78c8" /><path d="M1 13h22v5H1z" fill="#0d60ad" /><path d="M5.500 4H16v18H8a2.500 2.500 0 0 1-2.500-2.500z" fill="#2cb1f0" /></Svg><Badge $x={21} $y={6} $w={21} $bg="#4cc2ff" $fg="#10202c" $s={11}>42</Badge></Task>
        <Task $run><Svg s={24} c="none"><path d="M17.500 0 24 3v18l-6.500 3L5 12.500z" fill="#1f9cf0" /><path d="M17.500 6.800 10.500 12l7 5.200z" fill="#262a15" /><path d="M17.500 0v6.800L3 18 .5 16V14.500z" fill="#0b6fc0" /><path d="M.5 8 3 6l14.500 11.200V24L.5 9.500z" fill="#1583d6" /></Svg></Task>
        <Tray>
          <Slot $w={32}><Svg w={11} h={7} c="#fff" sw={1.4}><path d="M1 6 5.500 1.300 10 6" /></Svg></Slot>
          <Slot $w={32}><Svg w={12} h={17} c="#73cfe4" sw={1.2}><rect x="3.500" y=".7" width="5" height="10" rx="2.500" /><path d="M.8 8a5.200 5.200 0 0 0 10.400 0M6 13.300v3" /></Svg></Slot>
          <Slot $w={44}>ENG</Slot>
          <Slot $w={32}><Svg w={16} h={13} c="#fff" sw={1.2}><path d="M.8 4.500a10.200 10.200 0 0 1 14.400 0M3 7a7 7 0 0 1 10 0M5.300 9.400a3.800 3.800 0 0 1 5.400 0" /><circle cx="8" cy="11.300" r="1" fill="#fff" stroke="none" /></Svg></Slot>
          <Slot $w={16}><Svg w={16} h={13} c="#fff" sw={1.1}><path d="M.7 4.500h2.500L6.500 1.200v10.600L3.200 8.500H.7zM8.800 4.500q1.200 2 0 4M10.800 2.800q2.400 3.700 0 7.400" /><path d="M13 1.500q3.200 5 0 10" opacity=".4" /></Svg></Slot>
          <Slot $w={33}><Svg w={17} h={14} c="#fff" sw={1.1}><path d="M5 3.500h8a1.500 1.500 0 0 1 1.500 1.500v6a1.500 1.500 0 0 1-1.500 1.500H3.500A1.500 1.500 0 0 1 2 11V8.500" /><path d="M6.500 5.500H12.800V10.700H3.800V9z" fill="#fff" /><path d="M15.700 6.500v3" /><path d="M3.500 1 .8 5h2l-.8 3 3.500-4h-2z" fill="#fff" strokeWidth=".5" /></Svg></Slot>
          <Clock><div>0:28</div><div>25.04.2024</div></Clock>
          <Slot $w={28}><Svg w={15} h={15} c="#fff" sw={1.1}><path d="M2.500 11.500V7a4.700 4.700 0 0 1 4-4.700M1 11.500h12V9.500M5.300 13.200a1.800 1.800 0 0 0 3.400 0M9.500 1h4L9.800 4.800h4M6.500 5.800h2.700L6.700 8.700h2.700" /></Svg></Slot>
          <Slot $w={14} />
        </Tray>
      </Taskbar>
    </Desktop>
  );
}
